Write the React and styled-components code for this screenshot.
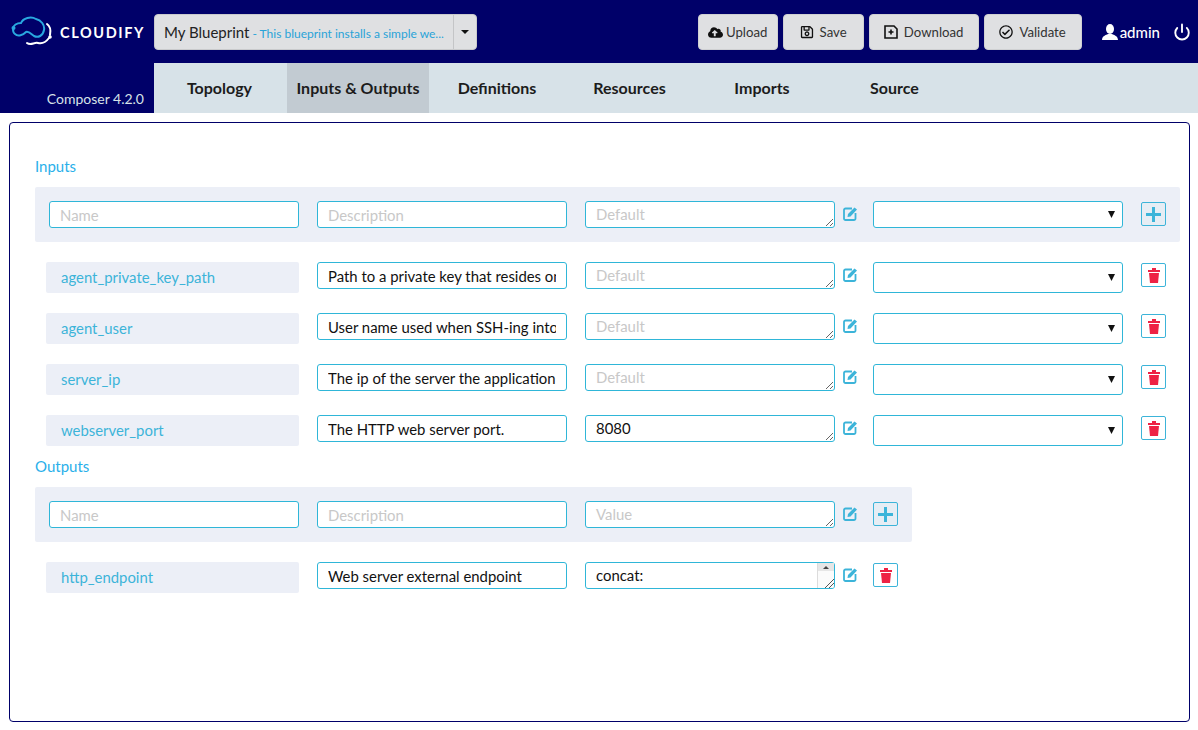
import React from 'react';
import styled, {createGlobalStyle} from 'styled-components';
import {FaCloudUploadAlt, FaRegSave, FaRegCheckCircle} from 'react-icons/fa';
import {Power} from 'lucide-react';

const GlobalStyle = createGlobalStyle`
  html, body {
    margin: 0;
    padding: 0;
    background: #fff;
    overflow: hidden;
    font-family: Lato, "Liberation Sans", sans-serif;
  }
  * { box-sizing: border-box; }
`;

const TopBar = styled.header`
  height: 63px;
  background: #000069;
  display: flex;
  align-items: flex-start;
  padding: 14px 7px 0 11px;
`;

const Logo = styled.div`
  width: 143px;
  height: 36px;
  display: flex;
  align-items: center;
  gap: 5px;
`;

const LogoText = styled.span`
  color: #fff;
  font-size: 14.5px;
  font-weight: 700;
  letter-spacing: 1.6px;
`;

const BlueprintSelect = styled.div`
  width: 323px;
  height: 36px;
  background: #dfe0e2;
  border: 1px solid #c9cacc;
  border-radius: 4px;
  display: flex;
  align-items: center;
`;

const BlueprintName = styled.div`
  flex: 1;
  padding-left: 9px;
  font-size: 15px;
  color: #222;
  white-space: nowrap;
  overflow: hidden;
`;

const BlueprintDesc = styled.span`
  font-size: 12px;
  color: #29a3d8;
  margin-left: 3px;
`;

const Caret = styled.div`
  width: 23px;
  height: 100%;
  border-left: 1px solid #c4c5c7;
  display: flex;
  align-items: center;
  justify-content: center;

  &::after {
    content: '';
    border-left: 4px solid transparent;
    border-right: 4px solid transparent;
    border-top: 4px solid #111;
  }
`;

const Actions = styled.div`
  margin-left: auto;
  display: flex;
  align-items: center;
  gap: 5px;
`;

const ActionButton = styled.button`
  width: ${({$width}) => $width}px;
  height: 36px;
  border: 1px solid #cfd0d2;
  border-radius: 4px;
  background: #dfe0e2;
  color: #333;
  font-family: inherit;
  font-size: 13.2px;
  display: flex;
  align-items: center;
  justify-content: center;
  gap: ${({$gap}) => $gap}px;
  padding: 0;

  svg {
    color: #111;
    display: block;
  }
`;

const UserBox = styled.div`
  margin-left: 20px;
  display: flex;
  align-items: center;
  color: #fff;
  font-size: 15px;
  font-weight: 500;
  height: 36px;
  gap: 2px;
`;

const PowerButton = styled.div`
  margin-left: 13px;
  height: 36px;
  display: flex;
  align-items: center;
  color: #fff;
`;

const SubBar = styled.div`
  height: 50px;
  display: flex;
`;

const Version = styled.div`
  width: 154px;
  background: #000069;
  color: #d7e2e8;
  font-size: 14px;
  text-align: right;
  padding: 27px 10px 0 0;
`;

const Tabs = styled.nav`
  flex: 1;
  background: #d7e2e8;
  display: flex;
`;

const Tab = styled.div`
  width: ${({$width}) => $width}px;
  padding-right: ${({$inset}) => $inset || 0}px;
  background: ${({$active}) => ($active ? '#c2cbd2' : 'transparent')};
  color: #1c1c1c;
  font-size: 16px;
  font-weight: 700;
  text-align: center;
  line-height: 50px;
`;

const Panel = styled.main`
  margin: 9px 8px 0 9px;
  height: 600px;
  border: 1px solid #000069;
  border-radius: 4px;
  padding: 33px 9px 0 25px;
`;

const SectionTitle = styled.h2`
  margin: 0;
  height: 21px;
  line-height: 21px;
  font-size: 15px;
  font-weight: 400;
  color: #2ab0ea;
`;

const FormBand = styled.div`
  margin-top: 10px;
  width: ${({$width}) => $width}px;
  height: 55px;
  background: #eceff7;
  border-radius: 2px;
  display: flex;
  align-items: flex-start;
  padding: 14px 0 0 14px;
`;

const RowList = styled.div`
  margin-top: 20px;
  display: flex;
  flex-direction: column;
  gap: 20px;
`;

const Row = styled.div`
  height: 31px;
  display: flex;
  align-items: flex-start;
  padding-left: 11px;
`;

const fieldBase = `
  border: 1px solid #2fb6d8;
  border-radius: 3px;
  background-color: #fff;
  font-family: Lato, "Liberation Sans", sans-serif;
  font-size: 14.9px;
  color: #111;
  outline: none;

  &::placeholder {
    color: #c8c8c8;
    opacity: 1;
  }
`;

const TextInput = styled.input`
  ${fieldBase}
  width: 250px;
  height: 27px;
  padding: 0 10px;
  margin-right: 18px;
`;

const KeyName = styled.div`
  width: 253px;
  height: 31px;
  background: #eceff7;
  border-radius: 2px;
  color: #3cb4d9;
  font-size: 14.9px;
  line-height: 31px;
  padding-left: 15px;
  margin-right: 18px;
`;

const TextArea = styled.textarea`
  ${fieldBase}
  display: block;
  width: 250px;
  height: 27px;
  padding: 2px 10px;
  line-height: 20px;
  resize: vertical;
  overflow: hidden;
`;

const TextAreaWrap = styled.div`
  position: relative;
  width: 250px;
  height: 27px;
`;

// the browser hides real scrollbars in the photograph, so this one lies over the field
const ScrollBar = styled.div`
  position: absolute;
  top: 1px;
  right: 1px;
  bottom: 1px;
  width: 17px;
  background: #fbfbfb;
  border-left: 1px solid #dcdcdc;
  border-radius: 0 2px 2px 0;
  pointer-events: none;
  display: flex;
  flex-direction: column;
  justify-content: space-between;
`;

const ScrollArrow = styled.div`
  height: 8px;
  background: #e6e6e6;
  display: flex;
  align-items: center;
  justify-content: center;

  &::after {
    content: '';
    border-left: 3px solid transparent;
    border-right: 3px solid transparent;
    border-bottom: 3px solid #444;
  }
`;

const ScrollGrip = styled.svg`
  display: block;
  align-self: flex-end;
`;

const EditIcon = styled.div`
  width: 38px;
  height: 27px;
  padding: 5px 0 0 8px;
  color: #3cb4d9;
  flex: none;

  svg {
    display: block;
  }
`;

const TypeSelect = styled.select`
  ${fieldBase}
  appearance: none;
  background-image: url("data:image/svg+xml,%3Csvg xmlns='http://www.w3.org/2000/svg' width='7' height='7'%3E%3Cpath d='M0 0H7L3.5 7Z' fill='%23111'/%3E%3C/svg%3E");
  background-repeat: no-repeat;
  background-position: right 7px center;
  width: 250px;
  height: ${({$height}) => $height}px;
  margin-right: 18px;
`;

const SquareButton = styled.button`
  width: 25px;
  height: 24px;
  margin-top: 1px;
  background: ${({$tint}) => ($tint ? '#e6edf4' : '#fff')};
  border: 1px solid #3cb4d9;
  border-radius: 2px;
  display: flex;
  align-items: center;
  justify-content: center;
  padding: 0;
  color: ${({$danger}) => ($danger ? '#ee2244' : '#3cb4d9')};
`;

const OutputsTitle = styled(SectionTitle)`
  margin-top: 10px;
`;

function CloudLogo() {
  return (
    <svg width="44" height="32" viewBox="0 0 44 32" fill="none">
      <path
        d="M2 13 C2 9 6 7 10 7 C12 2 20 0 25 3 C30 4 34 9 33 14 C32 20 27 22 23 20 C20 18 18 15 15 16 C12 19 7 21 4 18 C2.500 17 2 15 2 13 Z"
        stroke="#29a8e0"
        strokeWidth="2"
      />
      <circle cx="2.500" cy="12" r="2" fill="#29a8e0" />
      <path
        d="M36 8 C39 10 40 14 39 19 M16 27 C20 30 23 26 27 27 C31 28 35 26 38 22"
        stroke="#fff"
        strokeWidth="2"
        strokeLinecap="round"
      />
      <circle cx="39" cy="21" r="1.800" fill="#fff" />
    </svg>
  );
}

function FilePlusIcon() {
  return (
    <svg width="14" height="14" viewBox="0 0 14 14" fill="none">
      <path d="M1 1 H10 L13 4 V13 H1 Z" stroke="#111" strokeWidth="1.6" />
      <path d="M7 4.500 V9.500 M4.500 7 H9.500" stroke="#111" strokeWidth="1.6" />
    </svg>
  );
}

function UserIcon() {
  return (
    <svg width="16" height="16" viewBox="0 0 16 16" fill="#fff">
      <ellipse cx="8" cy="5" rx="4" ry="5" />
      <path d="M0 16 C0 12 4 11 6 10 H10 C12 11 16 12 16 16 Z" />
    </svg>
  );
}

function TrashIcon() {
  return (
    <svg width="12" height="15" viewBox="0 0 12 15" fill="currentColor">
      <rect x="4" y="0" width="4" height="2" />
      <rect x="0" y="2" width="12" height="2" />
      <path d="M1 5 H11 L10 15 H2 Z" />
    </svg>
  );
}

function PlusIcon() {
  return (
    <svg width="15" height="15" viewBox="0 0 15 15" fill="currentColor">
      <rect x="6" y="0" width="3" height="15" />
      <rect x="0" y="6" width="15" height="3" />
    </svg>
  );
}

function Edit() {
  return (
    <EditIcon>
      <svg width="15" height="15" viewBox="0 0 15 15" fill="none">
        <path
          d="M9 2.500 H2.500 A1.500 1.500 0 0 0 1 4 V12.500 A1.500 1.500 0 0 0 2.500 14 H11 A1.500 1.500 0 0 0 12.500 12.500 V7"
          stroke="currentColor"
          strokeWidth="1.8"
        />
        <path d="M5 8 L11.500 1.500 L14 3.500 L7.500 10.500 L4.500 11 Z" fill="currentColor" />
      </svg>
    </EditIcon>
  );
}

const inputs = [
  {name: 'agent_private_key_path', description: 'Path to a private key that resides on the management machine'},
  {name: 'agent_user', description: 'User name used when SSH-ing into the started machine'},
  {name: 'server_ip', description: 'The ip of the server the application will be deployed on'},
  {name: 'webserver_port', description: 'The HTTP web server port.', value: '8080'},
];

const actions = [
  {label: 'Upload', width: 80, gap: 3, icon: <FaCloudUploadAlt size={15} />},
  {label: 'Save', width: 81, gap: 6, icon: <FaRegSave size={14} />},
  {label: 'Download', width: 110, gap: 6, icon: <FilePlusIcon />},
  {label: 'Validate', width: 98, gap: 6, icon: <FaRegCheckCircle size={14} />},
];

const tabs = [
  {label: 'Topology', width: 133, inset: 2},
  {label: 'Inputs & Outputs', width: 142, active: true},
  {label: 'Definitions', width: 136},
  {label: 'Resources', width: 129},
  {label: 'Imports', width: 136},
  {label: 'Source', width: 129},
];

function App() {
  return (
    <>
      <GlobalStyle />
      <TopBar>
        <Logo>
          <CloudLogo />
          <LogoText>CLOUDIFY</LogoText>
        </Logo>
        <BlueprintSelect>
          <BlueprintName>
            My Blueprint<BlueprintDesc>- This blueprint installs a simple we...</BlueprintDesc>
          </BlueprintName>
          <Caret />
        </BlueprintSelect>
        <Actions>
          {actions.map(action => (
            <ActionButton key={action.label} $width={action.width} $gap={action.gap}>
              {action.icon}
              {action.label}
            </ActionButton>
          ))}
        </Actions>
        <UserBox>
          <UserIcon />
          admin
        </UserBox>
        <PowerButton>
          <Power size={18} strokeWidth={2.5} />
        </PowerButton>
      </TopBar>
      <SubBar>
        <Version>Composer 4.2.0</Version>
        <Tabs>
          {tabs.map(tab => (
            <Tab key={tab.label} $width={tab.width} $active={tab.active} $inset={tab.inset}>
              {tab.label}
            </Tab>
          ))}
        </Tabs>
      </SubBar>
      <Panel>
        <SectionTitle>Inputs</SectionTitle>
        <FormBand $width={1145}>
          <TextInput placeholder="Name" />
          <TextInput placeholder="Description" />
          <TextArea placeholder="Default" />
          <Edit />
          <TypeSelect $height={27} />
          <SquareButton $tint>
            <PlusIcon />
          </SquareButton>
        </FormBand>
        <RowList>
          {inputs.map(input => (
            <Row key={input.name}>
              <KeyName>{input.name}</KeyName>
              <TextInput defaultValue={input.description} />
              <TextArea placeholder="Default" defaultValue={input.value} />
              <Edit />
              <TypeSelect $height={31} />
              <SquareButton $danger>
                <TrashIcon />
              </SquareButton>
            </Row>
          ))}
        </RowList>
        <OutputsTitle>Outputs</OutputsTitle>
        <FormBand $width={877}>
          <TextInput placeholder="Name" />
          <TextInput placeholder="Description" />
          <TextArea placeholder="Value" />
          <Edit />
          <SquareButton $tint>
            <PlusIcon />
          </SquareButton>
        </FormBand>
        <RowList>
          <Row>
            <KeyName>http_endpoint</KeyName>
            <TextInput defaultValue="Web server external endpoint" />
            <TextAreaWrap>
              <TextArea defaultValue={'concat:\n  - http://\n  - get_attribute: [host, ip]\n  - port'} />
              <ScrollBar>
                <ScrollArrow />
                <ScrollGrip width="10" height="10" viewBox="0 0 10 10" stroke="#555" strokeWidth="1">
                  <path d="M1 10 L10 1 M5 10 L10 5" />
                </ScrollGrip>
              </ScrollBar>
            </TextAreaWrap>
            <Edit />
            <SquareButton $danger>
              <TrashIcon />
            </SquareButton>
          </Row>
        </RowList>
      </Panel>
    </>
  );
}

export default App;
